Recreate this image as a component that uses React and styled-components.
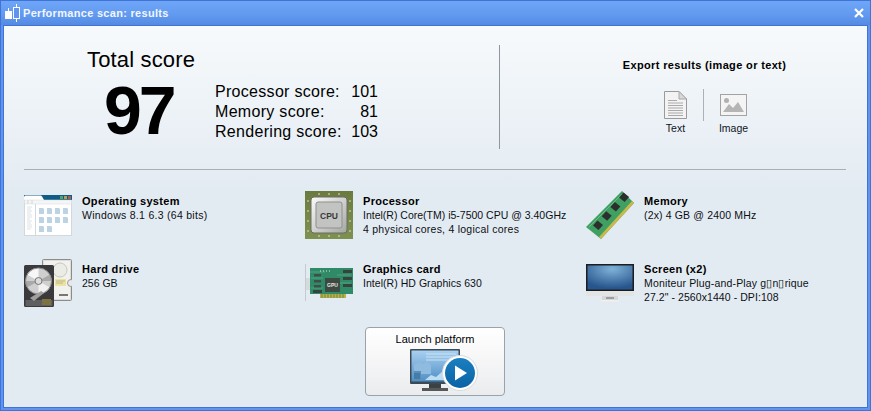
import styled, { createGlobalStyle } from "styled-components";

const Global = createGlobalStyle`
  html, body {
    margin: 0;
    padding: 0;
    background: #5c8fe6;
  }
  body {
    font-family: "Liberation Sans", Arial, sans-serif;
    color: #000;
  }
`;

const Frame = styled.div`
  width: 871px;
  height: 411px;
  box-sizing: border-box;
  border: 1px solid #3f74d6;
  background: #5f95ee;
  padding: 0 2px 2px 2px;
  display: flex;
  flex-direction: column;
  overflow: hidden;
`;

const TitleBar = styled.div`
  height: 24px;
  margin: 0 -2px;
  padding: 0 6px 0 3px;
  background: linear-gradient(#6fa6f8, #6099ef 60%, #558ae3);
  display: flex;
  align-items: center;
  flex-shrink: 0;
`;

const TitleText = styled.span`
  color: #f2f6ff;
  font-size: 11px;
  font-weight: bold;
  letter-spacing: 0.3px;
  margin-left: 2px;
`;

const CloseIcon = styled.svg`
  margin-left: auto;
`;

const Body = styled.div`
  flex: 1;
  border: 1px solid #3f74d6;
  background: linear-gradient(#f7fafc, #e3ebf2 165px);
  padding: 19px 20px 0 20px;
  display: flex;
  flex-direction: column;
  min-height: 0;
`;

const Top = styled.div`
  display: flex;
  height: 104px;
`;

const ScorePanel = styled.div`
  width: 476px;
  border-right: 1px solid #8e979e;
  padding-left: 63px;
  box-sizing: border-box;
`;

const TotalTitle = styled.div`
  font-size: 22px;
  line-height: 30px;
  letter-spacing: 0.15px;
`;

const ScoreRow = styled.div`
  display: flex;
  align-items: flex-start;
`;

const BigScore = styled.div`
  width: 128px;
  font-size: 68px;
  line-height: 70px;
  font-weight: bold;
  letter-spacing: -3px;
  padding-left: 17px;
  box-sizing: border-box;
`;

const SubScores = styled.div`
  display: grid;
  grid-template-columns: 136px 27px;
  font-size: 16px;
  line-height: 20px;
  padding-top: 7px;
`;

const ScoreLabel = styled.span`
  letter-spacing: 0.3px;
  white-space: nowrap;
`;

const ScoreValue = styled.span`
  text-align: right;
`;

const ExportPanel = styled.div`
  flex: 1;
  display: flex;
  flex-direction: column;
  align-items: center;
  padding-top: 13px;
  padding-left: 62px;
`;

const ExportTitle = styled.div`
  font-size: 11px;
  font-weight: bold;
  line-height: 14px;
  letter-spacing: 0.35px;
`;

const ExportRow = styled.div`
  display: flex;
  margin: 17px 0 0 3px;
`;

const ExportItem = styled.div`
  width: ${(p) => p.$width}px;
  display: flex;
  flex-direction: column;
  align-items: center;
  font-size: 10.5px;
  color: #10151c;
  height: 50px;
`;

const ExportIconBox = styled.div`
  height: 32px;
  margin-bottom: 1px;
  display: flex;
  align-items: center;
`;

const ExportDivider = styled.div`
  width: 1px;
  height: 32px;
  background: #aab2b8;
`;

const Rule = styled.div`
  height: 1px;
  background: #a9b0b5;
  margin-top: 20px;
  width: 822px;
  flex-shrink: 0;
`;

const SpecGrid = styled.div`
  display: grid;
  grid-template-columns: repeat(3, 281px);
  grid-auto-rows: 48px;
  row-gap: 20px;
  margin-top: 21px;
`;

const Spec = styled.div`
  display: flex;
  gap: 10px;
`;

const SpecIcon = styled.div`
  width: 48px;
  height: 48px;
  flex-shrink: 0;
  display: flex;
  align-items: center;
`;

const SpecText = styled.div`
  padding-top: 3px;
  font-size: 10.5px;
  line-height: 14px;
  color: #0c0f14;
  white-space: nowrap;
`;

const SpecTitle = styled.div`
  font-size: 11px;
  font-weight: bold;
  letter-spacing: 0.3px;
  color: #000;
`;

const SpecLine = styled.div`
  letter-spacing: ${(p) => p.$track}px;
`;

const Launch = styled.button`
  align-self: center;
  width: 140px;
  height: 69px;
  margin: 20px 0 0 -1px;
  padding: 0;
  box-sizing: border-box;
  border: 1px solid #98a4aa;
  border-radius: 4px;
  background: linear-gradient(#ffffff, #ebecee);
  font-family: inherit;
  font-size: 11px;
  color: #000;
  display: flex;
  flex-direction: column;
  align-items: center;
`;

const LaunchLabel = styled.span`
  line-height: 14px;
  margin-top: 4px;
`;

const PlatformSvg = styled.svg`
  margin: 3px 0 0 20px;
  overflow: visible;
`;

const DocIcon = () => (
  <svg width="23" height="28" viewBox="0 0 23 28">
    <path d="M.5.5H15L22.5 8V27.5H.5Z" fill="#f3f3f3" stroke="#9a9a9a" />
    <path d="M15 .5V8H22.5Z" fill="#d8d8d8" stroke="#a8a8a8" />
    <path
      d="M4 9.5H13M4 12H19M4 14.5H19M4 17H19M4 19.5H19M4 22H19M4 24.5H19"
      stroke="#aaa"
      strokeWidth="1"
    />
  </svg>
);

const PictureIcon = () => (
  <svg width="27" height="23" viewBox="0 0 27 23">
    <rect x=".5" y=".5" width="26" height="21" fill="#f4f4f4" stroke="#a3a3a3" />
    <circle cx="6.5" cy="6.5" r="2.5" fill="#b0b0b0" />
    <path d="M3 18L9 10L13 14L18 8L24 18Z" fill="#b5b5b5" />
  </svg>
);

const OsIcon = () => (
  <svg width="48" height="41" viewBox="0 0 48 41">
    <rect x=".5" y=".5" width="47" height="40" fill="#fff" stroke="#d3d8dc" />
    <rect width="48" height="5" fill="#0f5d86" />
    <path d="M0 5H20L18 1.500L17 .5H1L0 1.500Z" fill="#fff" />
    <rect x="36" y="1" width="3" height="3" fill="#5da05d" />
    <rect x="40" y="1" width="3" height="3" fill="#b5a04e" />
    <rect x="44" y="1" width="3" height="3" fill="#ad5a50" />
    <rect x=".5" y="5" width="47" height="4" fill="#f3f5f6" stroke="#d5d9dc" strokeWidth=".5" />
    <path d="M11.5 9V40M4 9V5M8 9V5" stroke="#d3d8dc" />
    <path
      d="M3 12H8M3 14H7M3 16H8M3 18H7M3 20H8M3 22H8M3 24H6M3 26H8M3 28H7M3 30H8M3 32H8M3 34H7"
      stroke="#dde1e4"
    />
    {[0, 1, 2].map((r) =>
      [0, 1, 2, 3].filter((c) => r < 2 || c < 2).map((c) => (
        <path
          key={`${r}-${c}`}
          d={`M${15 + c * 8} ${13 + r * 9}h4l1 1v5h-5z`}
          fill="#bcd3e4"
        />
      ))
    )}
  </svg>
);

const DriveIcon = () => (
  <svg width="48" height="48" viewBox="0 0 48 48">
    <rect x="18.500" y=".5" width="29" height="41" rx="1" fill="#dddeda" stroke="#8c8c8c" />
    <rect x="20" y="2" width="26" height="38" fill="#f1f1ed" />
    <circle cx="36" cy="11" r="7" fill="#ecece6" stroke="#c8c8c2" />
    <rect x="31" y="20" width="11" height="7" fill="#ece3a2" />
    <path d="M32 22H41M32 24H39" stroke="#9a9a7a" strokeWidth=".6" />
    <path d="M35 35h9v2H35z" fill="#777" />
    <circle cx="47" cy="24" r="3.500" fill="#e8e8e8" stroke="#999" />
    <rect x="0" y="6" width="30" height="42" rx="1.500" fill="#3a3a3c" />
    <rect x="1.500" y="41" width="27" height="6" fill="#5f5f60" />
    <circle cx="14.500" cy="22" r="13" fill="#cfcfcf" />
    <path d="M14.500 22L3 15.500A13 13 0 0 1 14.500 9Z" fill="#f7f7f7" />
    <path d="M14.500 22L26 28.500A13 13 0 0 1 14.500 35Z" fill="#f1f1f1" />
    <path d="M14.500 22L26 15.500A13 13 0 0 1 27.500 22Z" fill="#a9a9a9" />
    <path d="M14.500 22L3 28.500A13 13 0 0 1 1.500 22Z" fill="#a9a9a9" />
    <circle cx="14.500" cy="22" r="13" fill="none" stroke="#8d8d8d" />
    <circle cx="14.500" cy="22" r="3.500" fill="#dcdcdc" stroke="#777" />
    <path d="M6 39L17 32L20 34L10 42Z" fill="#9f9f9f" />
    <rect x="18" y="40" width="9" height="6" fill="#7d7340" />
  </svg>
);

const CpuIcon = () => (
  <svg width="48" height="48" viewBox="0 0 48 48">
    <defs>
      <linearGradient id="cpuCap" x1="0" y1="0" x2="1" y2="1">
        <stop offset="0" stopColor="#fbfbfb" />
        <stop offset="1" stopColor="#a4a6a4" />
      </linearGradient>
      <linearGradient id="cpuBoard" x1="0" y1="0" x2="0" y2="1">
        <stop offset="0" stopColor="#6b7a3e" />
        <stop offset="1" stopColor="#7f9150" />
      </linearGradient>
    </defs>
    <rect width="48" height="48" fill="url(#cpuBoard)" />
    <path
      d="M2 10h2M2 20h2M2 30h2M2 40h2M44 10h2M44 20h2M44 30h2M44 40h2M14 2v2M24 2v2M34 2v2M14 44v2M24 44v2M34 44v2"
      stroke="#dfe0bd"
    />
    <rect x="6" y="6" width="36" height="36" rx="3" fill="url(#cpuCap)" stroke="#6a6c62" />
    <rect x="11" y="11" width="26" height="26" rx="2" fill="#c2c4c2" stroke="#8f918d" />
    <text
      x="24"
      y="27.500"
      textAnchor="middle"
      fontSize="8.500"
      fontFamily="Liberation Sans"
      fontWeight="bold"
      fill="#3a3a3a"
    >
      CPU
    </text>
  </svg>
);

const GpuIcon = () => (
  <svg width="48" height="38" viewBox="0 0 48 38">
    <path d="M.5 0V37" stroke="#c4cacd" />
    <rect x="1" y="14" width="4" height="12" fill="#d5dadc" />
    <rect x="5" y="4" width="43" height="26" fill="#2f8a68" />
    <rect x="15" y="30" width="26" height="4" fill="#b8b04a" />
    <path d="M17 30v4M20 30v4M23 30v4M26 30v4M29 30v4M32 30v4M35 30v4M38 30v4" stroke="#6f8a40" />
    <path d="M5 8H20M32 11H46M32 19H46M6 14H18M6 24H18" stroke="#66b090" strokeWidth=".6" />
    <rect x="20" y="14" width="15" height="14" fill="#3d4a42" />
    <text
      x="27.500"
      y="23"
      textAnchor="middle"
      fontSize="5"
      fontFamily="Liberation Sans"
      fontWeight="bold"
      fill="#e8e8e8"
    >
      GPU
    </text>
    {[6, 13, 20].map((y) => (
      <rect key={y} x="38" y={y} width="9" height="3" fill="#37443d" />
    ))}
    {[10, 16, 21].map((y) => (
      <rect key={y} x="9" y={y} width="7" height="2.500" fill="#3d5048" />
    ))}
    <rect x="8" y="26" width="9" height="3" fill="#37443d" />
    <path d="M15 7h1M18 7h1M21 7h1M24 7h1" stroke="#dfe8e0" />
  </svg>
);

const RamIcon = () => (
  <svg width="48" height="48" viewBox="0 0 48 48">
    <path d="M36 0L48 12L15 48L0 36Z" fill="#3fa062" />
    <path d="M48 12L15 48L13 46L46 10Z" fill="#c9b84a" />
    <path d="M3 36L36 3" stroke="#6cbd8b" strokeWidth="1" />
    {[0, 1, 2, 3].map((i) => (
      <path
        key={i}
        d={`M${7 + i * 8.700} ${34.500 - i * 9.300}l4.500 -5l5.500 4.500l-4.500 5z`}
        fill="#2d2f2e"
      />
    ))}
  </svg>
);

const ScreenIcon = () => (
  <svg width="48" height="38" viewBox="0 0 48 38">
    <defs>
      <radialGradient id="screenGlow" cx=".55" cy=".15" r=".8">
        <stop offset="0" stopColor="#7fb2d8" />
        <stop offset="1" stopColor="#27558d" />
      </radialGradient>
    </defs>
    <rect width="48" height="27" fill="#1c1d1e" />
    <rect x="1.500" y="1.500" width="45" height="24" fill="url(#screenGlow)" />
    <rect y="27" width="48" height="5" fill="#e3e4e4" />
    <rect x="16" y="32" width="16" height="4" fill="#d5d7d8" />
    <rect x="20" y="33" width="8" height="2" fill="#9b9d9e" />
    <rect x="15" y="36" width="18" height="1.500" fill="#f0f0f0" />
  </svg>
);

const PlatformIcon = () => (
  <PlatformSvg width="70" height="42" viewBox="0 0 70 42">
    <defs>
      <linearGradient id="dash" x1="0" y1="0" x2="0" y2="1">
        <stop offset="0" stopColor="#a9d0f0" />
        <stop offset="1" stopColor="#4f8fc6" />
      </linearGradient>
      <linearGradient id="playFill" x1="0" y1="0" x2="0" y2="1">
        <stop offset="0" stopColor="#1a7fc0" />
        <stop offset="1" stopColor="#0b62a5" />
      </linearGradient>
    </defs>
    <rect x="0" y="0" width="50" height="35" rx="1" fill="#3b4a55" />
    <rect x="1.500" y="1.500" width="47" height="31" fill="url(#dash)" />
    <path d="M4 16l5-3l4 2l5-2l3 3v9H4z" fill="#8fbcde" />
    <path d="M4 22h7v9H4z" fill="#5b8fb8" />
    <path d="M15 31l6-5l5 2l8-7v10z" fill="#bcdcf2" />
    <path d="M16 5H46M16 8H46M16 11H46" stroke="#d7ebf8" strokeWidth=".8" />
    <path d="M5 24v6M7 24v6M9 24v6" stroke="#2f6a98" />
    <rect x="19" y="35" width="12" height="4" fill="#3c4144" />
    <rect x="12" y="39" width="26" height="3" fill="#55595b" />
    <circle cx="50" cy="24" r="17.500" fill="#fff" stroke="#d5dbe0" />
    <circle cx="50" cy="24" r="15" fill="url(#playFill)" />
    <path d="M45 16.500L57 24L45 31.500Z" fill="#fff" />
  </PlatformSvg>
);

const specs = [
  { title: "Operating system", lines: [["Windows 8.1 6.3 (64 bits)", 0.28]], icon: <OsIcon /> },
  {
    title: "Processor",
    lines: [
      ["Intel(R) Core(TM) i5-7500 CPU @ 3.40GHz", 0],
      ["4 physical cores, 4 logical cores", 0.24],
    ],
    icon: <CpuIcon />,
  },
  { title: "Memory", lines: [["(2x) 4 GB @ 2400 MHz", 0.15]], icon: <RamIcon /> },
  { title: "Hard drive", lines: [["256 GB", 0]], icon: <DriveIcon /> },
  { title: "Graphics card", lines: [["Intel(R) HD Graphics 630", 0.04]], icon: <GpuIcon /> },
  {
    title: "Screen (x2)",
    lines: [
      ["Moniteur Plug-and-Play g\u25AFn\u25AFrique", 0.16],
      ['27.2" - 2560x1440 - DPI:108', 0.07],
    ],
    icon: <ScreenIcon />,
  },
];

const App = () => {
  return (
    <>
      <Global />
      <Frame>
        <TitleBar>
          <svg width="17" height="18" viewBox="0 0 17 18">
            <path d="M4.500 4V15M12.500 0V18" stroke="#fff" />
            <rect x="1" y="7" width="7" height="8" fill="#fff" />
            <rect x="9.500" y="3.500" width="6" height="11" fill="#5f95ee" stroke="#fff" />
          </svg>
          <TitleText>Performance scan: results</TitleText>
          <CloseIcon width="10" height="10" viewBox="0 0 10 10">
            <path d="M1 1L9 9M9 1L1 9" stroke="#fff" strokeWidth="2.200" />
          </CloseIcon>
        </TitleBar>
        <Body>
          <Top>
            <ScorePanel>
              <TotalTitle>Total score</TotalTitle>
              <ScoreRow>
                <BigScore>97</BigScore>
                <SubScores>
                  <ScoreLabel>Processor score:</ScoreLabel>
                  <ScoreValue>101</ScoreValue>
                  <ScoreLabel>Memory score:</ScoreLabel>
                  <ScoreValue>81</ScoreValue>
                  <ScoreLabel>Rendering score:</ScoreLabel>
                  <ScoreValue>103</ScoreValue>
                </SubScores>
              </ScoreRow>
            </ScorePanel>
            <ExportPanel>
              <ExportTitle>Export results (image or text)</ExportTitle>
              <ExportRow>
                <ExportItem $width={54}>
                  <ExportIconBox>
                    <DocIcon />
                  </ExportIconBox>
                  Text
                </ExportItem>
                <ExportDivider />
                <ExportItem $width={60}>
                  <ExportIconBox>
                    <PictureIcon />
                  </ExportIconBox>
                  Image
                </ExportItem>
              </ExportRow>
            </ExportPanel>
          </Top>
          <Rule />
          <SpecGrid>
            {specs.map((s) => (
              <Spec key={s.title}>
                <SpecIcon>{s.icon}</SpecIcon>
                <SpecText>
                  <SpecTitle>{s.title}</SpecTitle>
                  {s.lines.map(([text, track]) => (
                    <SpecLine key={text} $track={track}>
                      {text}
                    </SpecLine>
                  ))}
                </SpecText>
              </Spec>
            ))}
          </SpecGrid>
          <Launch>
            <LaunchLabel>Launch platform</LaunchLabel>
            <PlatformIcon />
          </Launch>
        </Body>
      </Frame>
    </>
  );
};

export default App;
